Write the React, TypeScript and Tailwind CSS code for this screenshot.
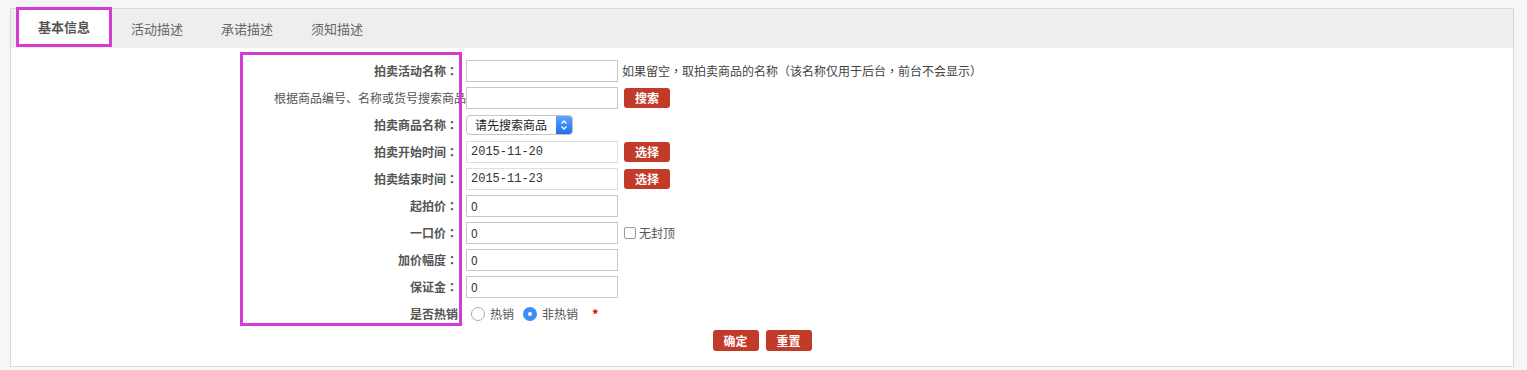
import React from "react";

const font = { fontFamily: '"Noto Sans CJK SC", "Noto Sans", sans-serif' };
const tc = { fontFamily: '"Noto Sans CJK TC", "Noto Sans CJK SC", sans-serif' };

function Btn({ children }: { children: React.ReactNode }) {
  return (
    <button className="h-[20px] w-[46px] rounded-[3px] bg-[#c23a28] text-[12px] font-bold leading-[20px] text-white">
      {children}
    </button>
  );
}

function Input({ value, mono, light }: { value?: string; mono?: boolean; light?: boolean }) {
  return (
    <div
      className={`flex h-[22px] w-[152px] items-center border bg-white pl-[4px] text-[12px] text-[#333] ${
        light ? "border-[#dedede]" : "border-[#c8c8c8]"
      }`}
      style={mono ? { fontFamily: '"Liberation Mono", monospace' } : undefined}
    >
      {value}
    </div>
  );
}

function Row({
  label,
  colon = true,
  bold = true,
  children,
}: {
  label: string;
  colon?: boolean;
  bold?: boolean;
  children: React.ReactNode;
}) {
  return (
    <div className="flex h-[27px] items-center">
      <div
        className={`w-[192px] shrink-0 whitespace-nowrap pr-[8px] text-right text-[12px] text-[#555] ${
          bold ? "font-bold" : "font-normal"
        }`}
      >
        {label}
        {colon && <span style={tc}>：</span>}
      </div>
      <div className="flex items-center gap-[6px]">{children}</div>
    </div>
  );
}

export default function App() {
  return (
    <div className="min-h-[370px] bg-[#f6f6f6] pl-[10px] pr-[13px] pt-[8px]" style={font}>
      <div className="relative h-[359px] border border-[#d9d9d9] bg-white">
        {/* tabs */}
        <div className="flex h-[39px] bg-[#eeeeee] pl-[5px]">
          <div className="-mt-[2px] flex h-[40px] w-[96px] items-center justify-center border-[3px] border-[#d63bd6] bg-white text-[13px] font-bold text-[#555]">
            基本信息
          </div>
          {["活动描述", "承诺描述", "须知描述"].map((t) => (
            <div key={t} className="flex w-[90px] items-center justify-center text-[13px] text-[#666]">
              {t}
            </div>
          ))}
        </div>

        {/* form */}
        <div className="pl-[263px] pt-[9px]">
          <Row label="拍卖活动名称">
            <Input />
            <span className="-ml-[2px] text-[12px] text-[#444]">
              如果留空<span style={tc}>，</span>取拍卖商品的名称<span style={tc}>（</span>该名称仅用于后台
              <span style={tc}>，</span>前台不会显示<span style={tc}>）</span>
            </span>
          </Row>
          <Row label="根据商品编号、名称或货号搜索商品" bold={false} colon={false}>
            <Input />
            <Btn>搜索</Btn>
          </Row>
          <Row label="拍卖商品名称">
            <div className="flex h-[20px] w-[107px] items-center overflow-hidden rounded-[4px] border border-[#c4c4c4] bg-white">
              <span className="flex-1 pl-[8px] text-[12px] text-[#222]">请先搜索商品</span>
              <span className="flex h-full w-[16px] items-center justify-center bg-gradient-to-b from-[#5aa6ff] to-[#1f6fe8]">
                <svg width="8" height="12" viewBox="0 0 8 12" fill="none" stroke="white" strokeWidth="1.4">
                  <path d="M1.5 4.5 L4 2 L6.5 4.5" />
                  <path d="M1.5 7.5 L4 10 L6.5 7.5" />
                </svg>
              </span>
            </div>
          </Row>
          <Row label="拍卖开始时间">
            <Input value="2015-11-20" mono light />
            <Btn>选择</Btn>
          </Row>
          <Row label="拍卖结束时间">
            <Input value="2015-11-23" mono light />
            <Btn>选择</Btn>
          </Row>
          <Row label="起拍价">
            <Input value="0" />
          </Row>
          <Row label="一口价">
            <Input value="0" />
            <span className="flex items-center gap-[3px] text-[12px] text-[#555]">
              <span className="h-[12px] w-[12px] rounded-[2px] border border-[#9a9a9a] bg-white" />
              无封顶
            </span>
          </Row>
          <Row label="加价幅度">
            <Input value="0" />
          </Row>
          <Row label="保证金">
            <Input value="0" />
          </Row>
          <Row label="是否热销" colon={false}>
            <div className="ml-[5px] flex items-center text-[12px] text-[#555]">
              <span className="h-[14px] w-[14px] rounded-full border border-[#aaa] bg-white" />
              <span className="ml-[5px]">热销</span>
              <span className="ml-[9px] flex h-[14px] w-[14px] items-center justify-center rounded-full bg-[#3a8ef6]">
                <span className="h-[4px] w-[4px] rounded-full bg-white" />
              </span>
              <span className="ml-[5px]">非热销</span>
              <span className="ml-[14px] text-[13px] font-bold text-[#e00]">*</span>
            </div>
          </Row>
        </div>

        <div className="mt-[3px] flex justify-center gap-[7px]">
          <button className="h-[21px] w-[46px] rounded-[3px] bg-[#c23a28] text-[12px] font-bold text-white">确定</button>
          <button className="h-[21px] w-[46px] rounded-[3px] bg-[#c23a28] text-[12px] font-bold text-white">重置</button>
        </div>

        {/* annotation overlay */}
        <div className="pointer-events-none absolute left-[229px] top-[43px] h-[274px] w-[222px] border-[3px] border-[#d63bd6]" />
      </div>
    </div>
  );
}
